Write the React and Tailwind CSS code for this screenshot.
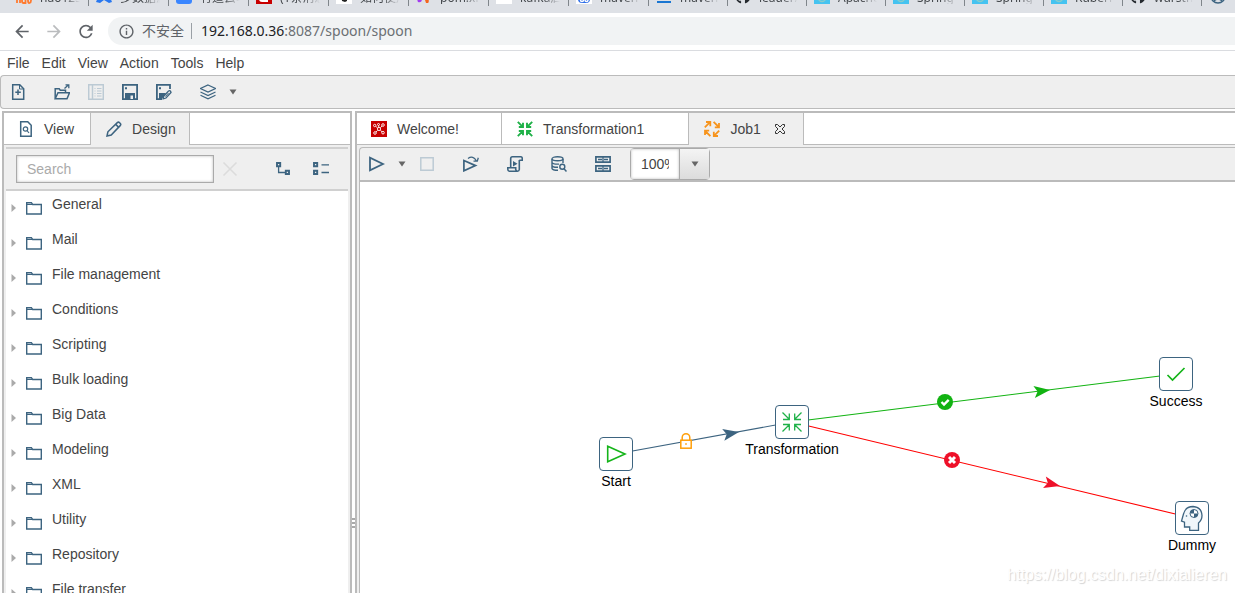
import { MdArrowBack, MdArrowForward, MdInfoOutline, MdRefresh } from "react-icons/md";
import { FaGithub } from "react-icons/fa";

const BLUE = "#3d6480";

const browserTabs = [
  { title: "hao123_上网", icon: "hao" },
  { title: "多数据源", icon: "cloud" },
  { title: "有道云笔", icon: "note" },
  { title: "(1条消息)", icon: "csdn" },
  { title: "如何使用", icon: "person" },
  { title: "pom.xml", icon: "petal" },
  { title: "kafka启", icon: "blank" },
  { title: "maven仓", icon: "baidu" },
  { title: "maven R", icon: "line" },
  { title: "leader/", icon: "github" },
  { title: "Apache", icon: "sky" },
  { title: "Spring C", icon: "sky" },
  { title: "Spring C", icon: "sky" },
  { title: "Kubern", icon: "sky" },
  { title: "wurstm", icon: "github" },
];

const menus = ["File", "Edit", "View", "Action", "Tools", "Help"];

const folders = [
  "General",
  "Mail",
  "File management",
  "Conditions",
  "Scripting",
  "Bulk loading",
  "Big Data",
  "Modeling",
  "XML",
  "Utility",
  "Repository",
  "File transfer",
];

// center points on the canvas
const nodes = [
  { label: "Start", x: 256, y: 272, Icon: StartIcon },
  { label: "Transformation", x: 432, y: 240, Icon: TransNodeIcon },
  { label: "Success", x: 816, y: 192, Icon: SuccessIcon },
  { label: "Dummy", x: 832, y: 336, Icon: DummyIcon },
];

function Svg({ size = 16, children, ...props }) {
  return (
    <svg
      width={size}
      height={size}
      viewBox={`0 0 ${size} ${size}`}
      fill="none"
      stroke={BLUE}
      strokeWidth="1.5"
      className="shrink-0"
      aria-hidden="true"
      {...props}
    >
      {children}
    </svg>
  );
}

/* ---------- icons ---------- */

function Favicon({ name }) {
  if (name === "github") return <FaGithub size={16} className="shrink-0 text-[#24292e]" />;
  return (
    <Svg stroke="none">
      {name === "hao" && (
        <path
          d="M1 8v7M1 12q0-1.500 1.500-1.500t1.500 1.500v3M9.500 10.500v4.500h-2q-1.500 0-1.500-2t1.500-2h2M12 12.500q0-2 1.500-2t1.500 2-1.500 2.500-1.500-2.500z"
          stroke="#ff7a2e"
          strokeWidth="1.800"
        />
      )}
      {name === "cloud" && <path d="M0 14 4 5l4 5 4-6 4 10-3 1-5-3-4 3z" fill="#2878f0" />}
      {name === "note" && <rect width="16" height="16" rx="3" fill="#3a86ff" />}
      {name === "csdn" && (
        <>
          <rect width="16" height="16" fill="#c80000" />
          <path d="M12 13H6q-2 0-2-2V6" stroke="#fff" strokeWidth="2" />
        </>
      )}
      {name === "person" && (
        <>
          <rect width="16" height="16" fill="#fff" />
          <path d="M5 6h6v7l-2 1-3-1z" fill="#222" />
        </>
      )}
      {name === "petal" && (
        <>
          <path d="M2 14q-2-4 2-5l2 2q0 4-4 3z" fill="#a23cf0" />
          <path d="M8 9l3-1q3 5 1 7l-2 0z" fill="#f4641e" />
        </>
      )}
      {name === "blank" && <rect width="16" height="16" fill="#fff" />}
      {name === "baidu" && (
        <>
          <rect width="16" height="16" fill="#fff" />
          <rect x="2" y="6" width="12" height="9" rx="4" fill="#2f6fe8" />
          <circle cx="6" cy="12" r="1.500" stroke="#fff" />
          <circle cx="10.500" cy="12" r="1.500" stroke="#fff" />
        </>
      )}
      {name === "line" && <path d="M1 13h14v2H1z" fill="#1976d2" />}
      {name === "sky" && (
        <>
          <rect width="16" height="16" fill="#45c3f0" />
          <circle cx="8" cy="10" r="3.500" stroke="#8cc" strokeWidth="1.500" />
        </>
      )}
      {name === "globe" && (
        <>
          <circle cx="8" cy="8" r="7" stroke={BLUE} strokeWidth="1.500" />
          <path d="M4 13q4-4 8 0" stroke={BLUE} />
        </>
      )}
    </Svg>
  );
}

function NewIcon() {
  return (
    <Svg>
      <path d="M2.700.700h7l4 4v10.500H2.700z" />
      <path d="M9.500 1v4h4" strokeWidth="1" />
      <path d="M8 5.500v5.500M5.300 8.300h5.500" />
    </Svg>
  );
}

function OpenIcon() {
  return (
    <Svg>
      <path d="M1.200 14.500V4.700h4l1 1.500h5.300v2.300" />
      <path d="M1.200 14.800 4 8.800h11.500l-2.500 6z" />
      <path d="M10.500 4.500 14.500.800M11.500.800h3.300v3.500" strokeWidth="1.300" />
    </Svg>
  );
}

function ExploreIcon() {
  return (
    <Svg stroke="#bccad4">
      <path d="M.700.700h14.600v14.600H.700zM4.500 1v14" />
      <path d="M6.500 4.500h1M9 4.500h4.500M6.500 7h1M9 7h4.500M6.500 9.500h1M9 9.500h4.500M6.500 12h1M9 12h4.500" strokeWidth="1.200" />
    </Svg>
  );
}

function SaveIcon() {
  return (
    <Svg strokeWidth="1.800">
      <path d="M.900.900h14.200v14.200H.900z" />
      <path d="M3 9h10v6H3z" fill={BLUE} stroke="none" />
      <path d="M8.500 11.500h2.500V15H8.500z" fill="#efefef" stroke="none" />
      <path d="M3 3.200h2v2H3z" fill={BLUE} stroke="none" />
    </Svg>
  );
}

function SaveAsIcon() {
  return (
    <Svg strokeWidth="1.800">
      <path d="M14 5V.900H.900v14.200H6" />
      <path d="M3 9h7l-4 6H3z" fill={BLUE} stroke="none" />
      <path d="M3 3.200h2v2H3z" fill={BLUE} stroke="none" />
      <path d="m7.500 12.500 5-5.500q2-1 2.500 1.500l-5 5.500-2.800.800z" fill="#efefef" strokeWidth="1.300" />
      <path d="m9.500 12.500 3-3.500" strokeWidth="1" />
    </Svg>
  );
}

function LayersIcon() {
  return (
    <Svg strokeWidth="1.200">
      <path d="m8 1 7.500 3.500L8 8 .500 4.500z" />
      <path d="M.500 8 8 11.500 15.500 8M.500 11.300 8 14.800l7.500-3.500" />
    </Svg>
  );
}

function Caret() {
  return (
    <svg width="8" height="6" viewBox="0 0 8 6" aria-hidden="true">
      <path d="M.500.500h7L4 5.500z" fill="#666" />
    </svg>
  );
}

function ViewIcon() {
  return (
    <Svg>
      <path d="M2.700.700h7l3.500 3.500v11H2.700z" />
      <circle cx="7.500" cy="8" r="2.200" strokeWidth="1.200" />
      <path d="m9 9.500 2 2.500" strokeWidth="1.200" />
    </Svg>
  );
}

function PencilIcon() {
  return (
    <Svg strokeWidth="1.500">
      <path d="m1 15 .900-4.200L11.300 1.600q1.200-1 2.300.100l.700.700q1 1.100-.100 2.200L5.200 14z" />
      <path d="m9.700 3.400 3 3" />
    </Svg>
  );
}

function ExpandIcon() {
  return (
    <Svg strokeWidth="1.900">
      <path d="M2 2h3.200v3.200H2zM10.800 9.800H14V13h-3.200z" />
      <path d="M3.600 6v5.500h6.500" strokeWidth="1.300" />
    </Svg>
  );
}

function CollapseIcon() {
  return (
    <Svg strokeWidth="1.900">
      <path d="M1 2h3.200v3.200H1zM1 9.800h3.200V13H1z" />
      <path d="M8.500 3.800H16M8.500 11.500H16" strokeWidth="1.300" />
    </Svg>
  );
}

function FolderIcon() {
  return (
    <Svg strokeWidth="1.400">
      <path d="M.700 14V2.700h4.700l1.200 1.800h8.700V14z" />
      <path d="M.700 4.500H6" strokeWidth="1" />
    </Svg>
  );
}

function TransIcon({ color = "#1fb148" }) {
  return (
    <Svg stroke={color} strokeWidth="1.900">
      <path d="m.800.800 5 5M6 1.800V6H1.800M15.200.800l-5 5M10 1.800V6h4.200M.800 15.200l5-5M6 14.200V10H1.800M15.200 15.200l-5-5M10 14.200V10h4.200" />
    </Svg>
  );
}

function JobIcon() {
  return (
    <Svg stroke="#f7941d" strokeWidth="1.800">
      <path d="M.800 6.400 6 1.200M2 1h4.300v4.200M9.600.800l5.200 5.200M15 2v4.300h-4.200M15.200 9.600 10 14.800M9.800 10.800V15H14M6.400 15.200 1.200 10M1 14V9.700h4.200" />
    </Svg>
  );
}

function WelcomeIcon() {
  return (
    <Svg stroke="#fff" strokeWidth=".900">
      <rect width="16" height="16" fill="#c80000" stroke="none" />
      <circle cx="3.700" cy="4.500" r="1.200" />
      <circle cx="7.500" cy="3.500" r="1" />
      <circle cx="12" cy="4" r="1.300" />
      <circle cx="8" cy="8" r="1.600" />
      <circle cx="4" cy="12" r="1.300" />
      <circle cx="12" cy="11.700" r="1.300" />
      <path d="m4.700 5.300 2 1.700M11 5 9.300 6.800M5 11l1.700-1.700M11 10.800 9.300 9.200M7.600 4.500l.200 1.800" />
    </Svg>
  );
}

function CloseIcon() {
  return (
    <Svg size={10} stroke="#333" strokeWidth="1">
      <path d="M.500.500h2L5 3 7.500.500h2v2L7 5l2.500 2.500v2h-2L5 7 2.500 9.500h-2v-2L3 5 .500 2.500z" />
    </Svg>
  );
}

function RunIcon() {
  return (
    <Svg>
      <path d="M1 1.700v12.600L14 8z" strokeWidth="1.800" />
    </Svg>
  );
}

function StopIcon() {
  return (
    <Svg stroke="#bccad4">
      <path d="M1.800 1.800h12.400v12.400H1.800z" />
    </Svg>
  );
}

function ReplayIcon() {
  return (
    <Svg strokeWidth="1.700">
      <path d="M.900 4.500v10.300L12.500 9.600z" />
      <path d="M5 2.500q5-3.500 8.500 2.500M10.500 5.200h3.800l1-3.500" strokeWidth="1.300" />
    </Svg>
  );
}

function ScriptIcon() {
  return (
    <Svg strokeWidth="1.600">
      <path d="M3.700 11.500V2.500q0-1.700 1.700-1.700h8.500q1.400.200 1.400 2v1.500h-3" />
      <path d="M12.300 4v9.500q-.200 1.700-1.800 1.700H2.200Q.800 15 .800 13.300v-1.500h7.900v1.500q.200 1.800 1.800 1.900" />
      <path d="m6 5 4.500 2.700L6 10.400z" fill={BLUE} stroke="none" />
    </Svg>
  );
}

function DatabaseIcon() {
  return (
    <Svg strokeWidth="1.400">
      <ellipse cx="6.500" cy="2.800" rx="5.500" ry="2" />
      <path d="M1 3v9.500q.500 1.800 6 1.800M12 3v4M1 6.300q.500 2 7 1.800M1 9.500q.500 2 6 1.800" />
      <circle cx="11.300" cy="10.800" r="2.500" />
      <path d="m13 12.800 2.500 2.700" strokeWidth="1.500" />
    </Svg>
  );
}

function GridIcon() {
  return (
    <Svg strokeWidth="1.700">
      <path d="M.900.900h14.200v5.300H.900zM.900 9.800h14.200v5.300H.900z" />
      <path d="M3 3.500h4M9 3.500h4M8 1v5M3 12.500h4M9 12.500h4M8 10v5" strokeWidth="1.300" />
    </Svg>
  );
}

function StartIcon() {
  return (
    <Svg size={24} stroke="#15b41a" strokeWidth="1.600">
      <path d="M3.700 4.300v15.500L21 12z" />
    </Svg>
  );
}

function TransNodeIcon() {
  return (
    <Svg size={24} stroke="#1fb148" strokeWidth="1.300">
      <path d="m2.500 2.500 6.500 6.500M9.300 3.500v6H3M21.500 2.500 15 9M14.700 3.500v6H21M2.500 21.500 9 15M9.300 20.500v-6H3M21.500 21.500 15 15M14.700 20.500v-6H21" />
    </Svg>
  );
}

function SuccessIcon() {
  return (
    <Svg size={24} stroke="#15b41a" strokeWidth="1.700">
      <path d="m3.500 13 5 5L20.500 6" />
    </Svg>
  );
}

function DummyIcon() {
  return (
    <Svg size={26} strokeWidth="1.300">
      <path
        d="M4.500 9Q6.500 1.500 14 1.500q8.500.500 9 9 0 4.500-3.500 7.500v7.500H10.700v-3.500H5.500v-4.800L2.500 16z"
        fill="#f0f6fa"
      />
      <circle cx="15" cy="8.500" r="4" fill="#fff" strokeWidth="1" />
      <path d="M15 8.500V4.500a4 4 0 0 0-4 4zM15 8.500v4a4 4 0 0 0 4-4z" fill={BLUE} stroke="none" />
      <circle cx="7.500" cy="11" r=".800" fill={BLUE} stroke="none" />
    </Svg>
  );
}

/* ---------- pieces ---------- */

function ToolButton({ label, children, className = "w-[34px]" }) {
  return (
    <button type="button" aria-label={label} className={`flex h-8 shrink-0 items-center justify-center ${className}`}>
      {children}
    </button>
  );
}

function Tab({ icon, label, active, closable, className }) {
  return (
    <div
      className={`flex items-center border-r border-[#bbb] ${
        active ? "bg-[#efefef]" : "border-b bg-white"
      } ${className}`}
    >
      <button type="button" role="tab" aria-selected={!!active} className="flex items-center gap-[10px]">
        {icon}
        {label}
      </button>
      {closable && (
        <button type="button" aria-label={`Close ${label}`} className="ml-[14px]">
          <CloseIcon />
        </button>
      )}
    </div>
  );
}

function BrowserBar() {
  return (
    <header className="shrink-0 border-b border-[#dadce0] font-['Noto_Sans','Noto_Sans_CJK_SC',sans-serif]">
      <div className="flex h-[13px] items-end overflow-hidden bg-[#dee1e6] pl-[9px]">
        {browserTabs.map((tab, i) => (
          <div
            key={i}
            className={`flex h-[25px] shrink-0 items-end pb-[9px] pl-[7px] ${i < 8 ? "w-20" : "w-[79px]"}`}
          >
            <Favicon name={tab.icon} />
            <span className="ml-2 w-10 overflow-hidden text-xs leading-3 whitespace-nowrap text-[#45494d] [mask-image:linear-gradient(to_right,black_60%,transparent)]">
              {tab.title}
            </span>
            <span className="mb-[-2px] ml-2 h-4 w-px bg-[#80868b]" />
          </div>
        ))}
        <div className="flex shrink-0 items-end pb-[9px] pl-2">
          <Favicon name="globe" />
        </div>
      </div>
      <div className="flex h-[37px] items-center bg-white pb-px pl-3">
        <button type="button" aria-label="Back" className="flex w-5 justify-center text-[#5f6368]">
          <MdArrowBack size={21} />
        </button>
        <button type="button" aria-label="Forward" className="ml-3 flex w-5 justify-center text-[#babcbe]">
          <MdArrowForward size={21} />
        </button>
        <button type="button" aria-label="Reload" className="ml-3 flex w-5 justify-center text-[#5f6368]">
          <MdRefresh size={21} />
        </button>
        <div className="ml-3 flex h-7 flex-1 items-center rounded-l-full bg-[#f1f3f4] pl-[10px] text-sm">
          <MdInfoOutline size={17} className="shrink-0 text-[#5f6368]" />
          <span className="ml-[7px] text-[#5f6368]">不安全</span>
          <span className="mr-[9px] ml-[7px] h-4 w-px bg-[#9aa0a6]" />
          <a href="http://192.168.0.36:8087/spoon/spoon" className="text-[#6b6f73]">
            <span className="text-[#202124]">192.168.0.36</span>:8087/spoon/spoon
          </a>
        </div>
      </div>
    </header>
  );
}

function SidePanel() {
  return (
    <aside className="flex w-[350px] shrink-0 flex-col border-2 border-b-0 border-[#bbb] bg-[#efefef]">
      <div className="flex h-8 shrink-0" role="tablist">
        <Tab icon={<ViewIcon />} label="View" className="pr-4 pl-[14px]" />
        <Tab icon={<PencilIcon />} label="Design" active className="pr-[13px] pl-[15px]" />
        <div className="flex-1 border-b border-[#bbb] bg-white" />
      </div>
      <div className="mx-[2px] mt-[2px] flex min-h-0 flex-1 flex-col">
        <div className="flex h-11 shrink-0 items-center border-y-2 border-[#d0d0d0] pr-[11px] pl-[10px]">
          <input
            type="text"
            placeholder="Search"
            aria-label="Search"
            className="h-7 w-[198px] border border-[#aaa] bg-white px-[10px] shadow-[inset_0_0_3px_#bbb] outline-none placeholder:text-[#aaa]"
          />
          <ToolButton label="Clear search" className="w-8">
            <Svg stroke="#dcdcdc" strokeWidth="1.600">
              <path d="m1.500 1.500 13 13M14.500 1.500l-13 13" />
            </Svg>
          </ToolButton>
          <div className="ml-auto flex gap-[6px]">
            <ToolButton label="Expand all" className="w-8">
              <ExpandIcon />
            </ToolButton>
            <ToolButton label="Collapse all" className="w-8">
              <CollapseIcon />
            </ToolButton>
          </div>
        </div>
        <ul className="min-h-0 flex-1 overflow-hidden bg-white">
          {folders.map((name) => (
            <li key={name} className="flex h-[35px] items-center pb-[2px] pl-[5px]">
              <svg width="5" height="8" viewBox="0 0 5 8" aria-hidden="true">
                <path d="M.500 0v8L5 4z" fill="#aaa" />
              </svg>
              <span className="ml-[10px]">
                <FolderIcon />
              </span>
              <span className="ml-[10px] pb-2">{name}</span>
            </li>
          ))}
        </ul>
      </div>
    </aside>
  );
}

function Hop({ from, to, color, headColor = color, tip, angle }) {
  return (
    <g>
      <line x1={from[0]} y1={from[1]} x2={to[0]} y2={to[1]} stroke={color} strokeWidth="1.100" />
      <path
        d="M0 0-16-6-12.500 0-16 6z"
        fill={headColor}
        transform={`translate(${tip[0]} ${tip[1]}) rotate(${angle})`}
      />
    </g>
  );
}

function Canvas() {
  return (
    <div className="relative min-h-0 flex-1 overflow-hidden border-l border-[#bbb] bg-white text-black">
      <svg className="absolute inset-0 h-full w-full" aria-hidden="true">
        <Hop from={[256, 272]} to={[432, 240]} color={BLUE} tip={[379, 250]} angle={-10.3} />
        <Hop from={[432, 240]} to={[816, 192]} color="#12b312" tip={[690, 208]} angle={-7.1} />
        <Hop from={[432, 240]} to={[832, 336]} color="#ff0000" headColor="#ee1029" tip={[700, 304]} angle={13.5} />

        {/* lock: the hop always runs */}
        <g transform="translate(320 251)" stroke="#ff9f0a" strokeWidth="1.500" fill="#fff">
          <path d="M2.200 8V4.500a3.800 3.800 0 0 1 7.600 0V8" />
          <rect x=".800" y="7.200" width="10.400" height="8" />
          <path d="M5.200 11h1.600" />
        </g>

        <circle cx="585" cy="220" r="8" fill="#12b312" />
        <path d="m581.500 220 2.500 2.500 4.700-4.700" stroke="#fff" strokeWidth="2.400" fill="none" />

        <circle cx="592" cy="278" r="8" fill="#ee1029" />
        <path d="m589 275 6 6M595 275l-6 6" stroke="#fff" strokeWidth="3" />
      </svg>

      {nodes.map(({ label, x, y, Icon }) => (
        <div
          key={label}
          className="absolute flex w-28 flex-col items-center"
          style={{ left: x - 56, top: y - 17 }}
        >
          <div className="flex size-[34px] items-center justify-center rounded border border-[#3d6480] bg-white">
            <Icon />
          </div>
          <span className="leading-5">{label}</span>
        </div>
      ))}

      <p className="absolute right-2 bottom-2 text-base leading-5 text-white [text-shadow:1px_1px_1px_#d4d4d4]">
        https://blog.csdn.net/dixialieren
      </p>
    </div>
  );
}

function Workspace() {
  return (
    <main className="flex min-w-0 flex-1 flex-col border-t-2 border-l-2 border-[#bbb] bg-[#efefef]">
      <div className="flex h-8 shrink-0" role="tablist">
        <Tab icon={<WelcomeIcon />} label="Welcome!" className="pr-[42px] pl-[14px]" />
        <Tab icon={<TransIcon />} label="Transformation1" className="pr-[44px] pl-[15px]" />
        <Tab icon={<JobIcon />} label="Job1" active closable className="pr-[18px] pl-[15px]" />
        <div className="flex-1 border-b border-[#bbb] bg-white" />
      </div>
      <div className="mt-[2px] ml-[2px] flex min-h-0 flex-1 flex-col">
        <div className="flex h-[35px] shrink-0 items-center rounded-tl border-t border-b-2 border-l border-[#bbb]">
          <ToolButton label="Run">
            <RunIcon />
          </ToolButton>
          <ToolButton label="Run options" className="w-4">
            <Caret />
          </ToolButton>
          <div className="flex gap-[10px]">
            <ToolButton label="Stop">
              <StopIcon />
            </ToolButton>
            <ToolButton label="Replay">
              <ReplayIcon />
            </ToolButton>
            <ToolButton label="Generate SQL">
              <ScriptIcon />
            </ToolButton>
            <ToolButton label="Explore database">
              <DatabaseIcon />
            </ToolButton>
            <ToolButton label="Show results">
              <GridIcon />
            </ToolButton>
            <div className="flex h-8 w-20 rounded-sm border border-[#aaa]">
              <input
                type="text"
                aria-label="Zoom"
                defaultValue="100%"
                className="min-w-0 flex-1 bg-white px-[10px] shadow-[inset_0_0_3px_#bbb] outline-none"
              />
              <button
                type="button"
                aria-label="Zoom levels"
                className="flex w-[30px] items-center justify-center border-l border-[#aaa] bg-linear-to-b from-[#f4f4f4] to-[#dcdcdc]"
              >
                <Caret />
              </button>
            </div>
          </div>
        </div>
        <Canvas />
      </div>
    </main>
  );
}

export default function App() {
  return (
    <div className="flex h-screen flex-col overflow-hidden bg-white font-['Liberation_Sans',Arial,sans-serif] text-sm text-[#444]">
      <BrowserBar />
      <nav className="flex h-6 shrink-0 items-center gap-3 pl-[7px]">
        {menus.map((m) => (
          <button key={m} type="button">
            {m}
          </button>
        ))}
      </nav>
      <div className="flex h-[34px] shrink-0 items-center rounded-l border border-r-0 border-[#bbb] bg-[#efefef]">
        <ToolButton label="New">
          <NewIcon />
        </ToolButton>
        <div className="ml-[10px] flex">
          <ToolButton label="Open">
            <OpenIcon />
          </ToolButton>
          <ToolButton label="Explore repository">
            <ExploreIcon />
          </ToolButton>
          <ToolButton label="Save">
            <SaveIcon />
          </ToolButton>
          <ToolButton label="Save as">
            <SaveAsIcon />
          </ToolButton>
        </div>
        <div className="ml-[10px] flex">
          <ToolButton label="Perspective">
            <LayersIcon />
          </ToolButton>
          <ToolButton label="Choose perspective" className="w-4">
            <Caret />
          </ToolButton>
        </div>
      </div>
      <div className="mt-[2px] flex min-h-0 flex-1 pl-[2px]">
        <SidePanel />
        {/* splitter grip sits a bit below the middle of the window */}
        <div className="flex w-[3px] shrink-0 flex-col justify-end gap-[2px] pb-[65px]">
          <span className="h-[2px] bg-[#aaa]" />
          <span className="h-[2px] bg-[#aaa]" />
          <span className="h-[2px] bg-[#aaa]" />
        </div>
        <Workspace />
      </div>
    </div>
  );
}
